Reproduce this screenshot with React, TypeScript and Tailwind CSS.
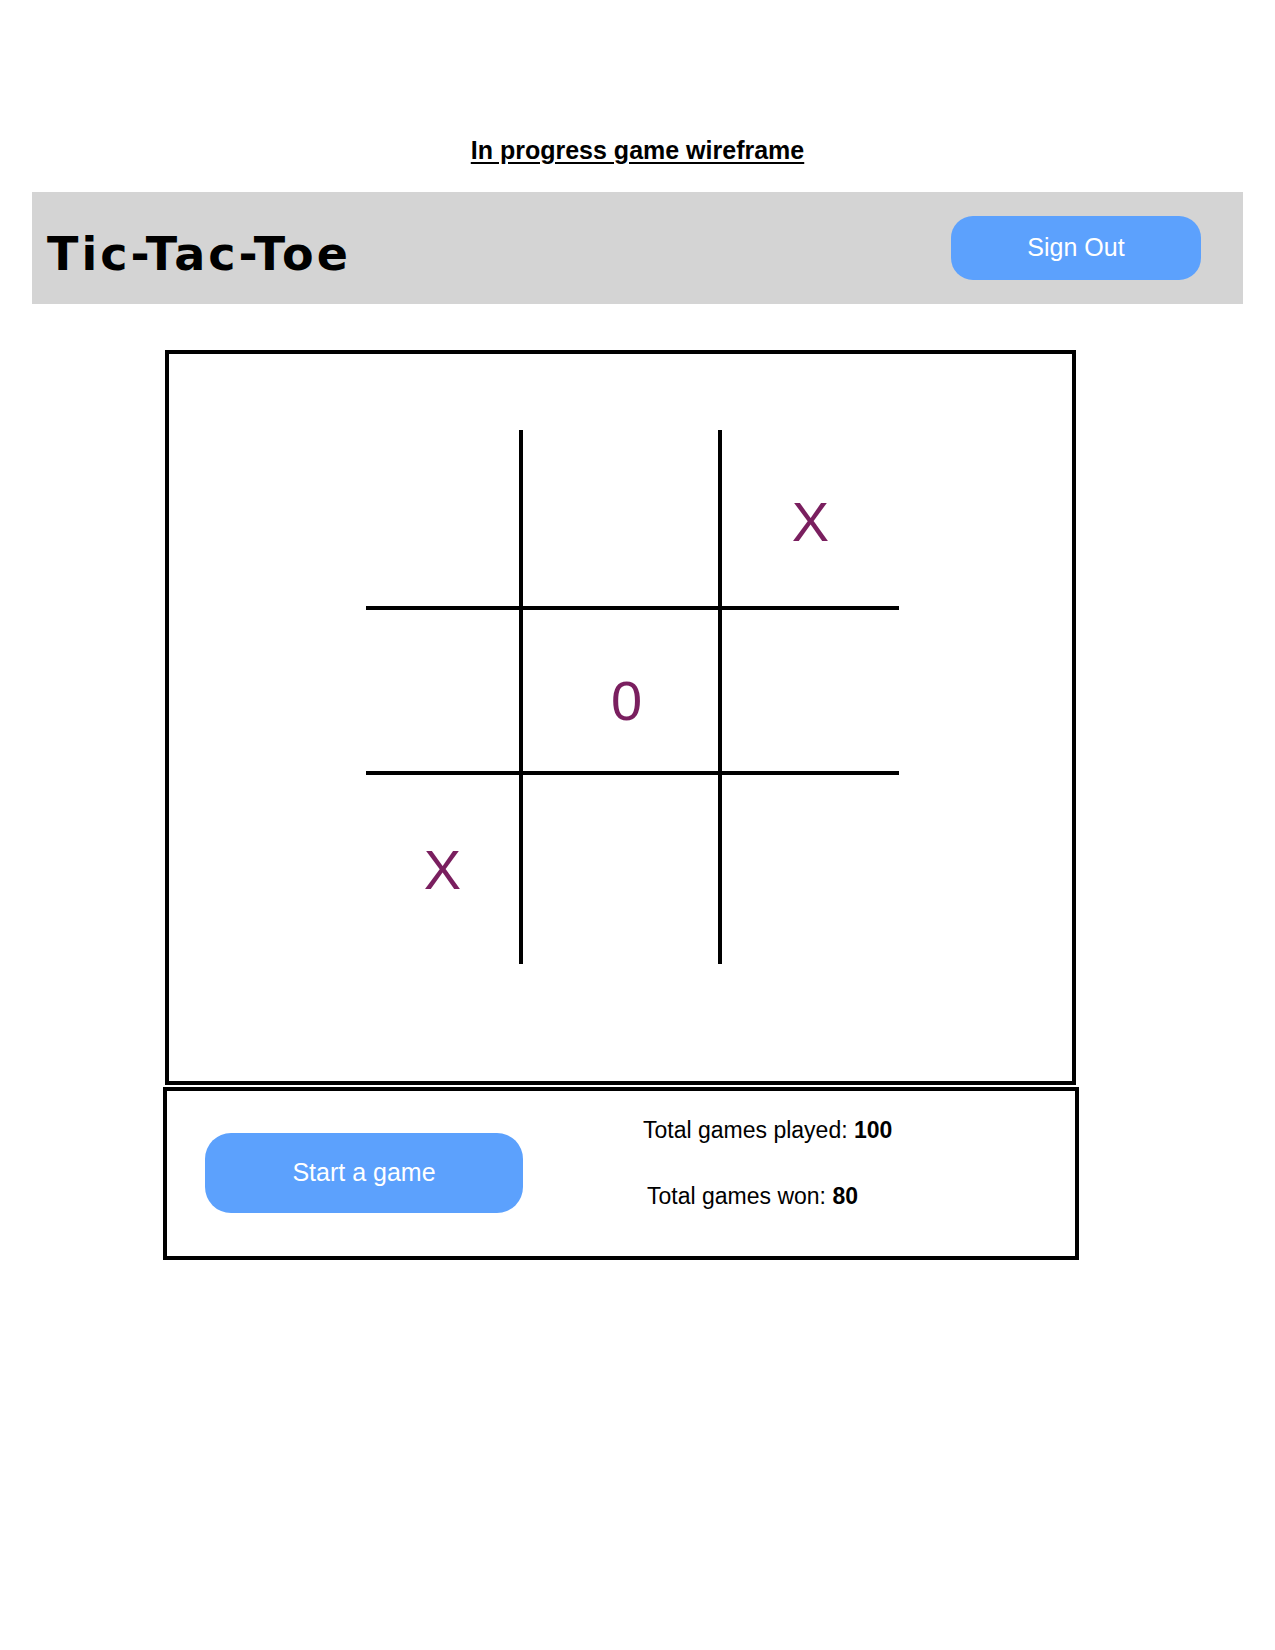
const cells = [
  { mark: "", cls: "border-r-4 border-b-4" },
  { mark: "", cls: "border-r-4 border-b-4" },
  { mark: "X", cls: "border-b-4", offset: "mt-2" },
  { mark: "", cls: "border-r-4 border-b-4" },
  { mark: "0", cls: "border-r-4 border-b-4", offset: "ml-3 mt-5" },
  { mark: "", cls: "border-b-4" },
  { mark: "X", cls: "border-r-4" },
  { mark: "", cls: "border-r-4" },
  { mark: "", cls: "" },
]

function Board() {
  return (
    <div className="grid grid-cols-[157px_199px_177px] grid-rows-[180px_165px_189px]">
      {cells.map((c, i) => (
        <div key={i} className={`flex items-center justify-center border-black ${c.cls}`}>
          {c.mark && (
            <span className={`text-[56px] leading-none text-[#7a1f5f] ${c.offset ?? ""}`}>{c.mark}</span>
          )}
        </div>
      ))}
    </div>
  )
}

export default function App() {
  return (
    <div className="min-h-[1650px] w-[1275px] bg-white font-['Liberation_Sans',Arial,sans-serif] text-black">
      <div className="pt-[135px] text-center">
        <h1 className="text-[25px] leading-[30px] font-bold underline underline-offset-[3px]">
          In progress game wireframe
        </h1>
      </div>

      <header className="mt-[27px] ml-[32px] flex h-[112px] w-[1211px] items-center justify-between bg-[#d4d4d4] pl-[15px] pr-[42px]">
        <span className="mt-[12px] font-['Comic_Sans_MS','DejaVu_Sans',sans-serif] text-[46px] font-bold leading-none tracking-[3px]">
          Tic-Tac-Toe
        </span>
        <button className="h-[64px] w-[250px] rounded-[22px] bg-[#5ca1fd] text-[25px] text-white">
          Sign Out
        </button>
      </header>

      <section className="mt-[46px] ml-[165px] h-[735px] w-[911px] border-4 border-black pl-[197px] pt-[76px]">
        <Board />
      </section>

      <section className="mt-[2px] ml-[163px] flex h-[173px] w-[916px] items-start border-4 border-black pl-[38px]">
        <button className="mt-[42px] h-[80px] w-[318px] rounded-[26px] bg-[#5ca1fd] text-[25px] text-white">
          Start a game
        </button>
        <div className="ml-[120px] mt-[26px] flex flex-col gap-[40px] text-[23px] leading-[26px]">
          <p>
            Total games played: <b>100</b>
          </p>
          <p className="ml-1">
            Total games won: <b>80</b>
          </p>
        </div>
      </section>
    </div>
  )
}
